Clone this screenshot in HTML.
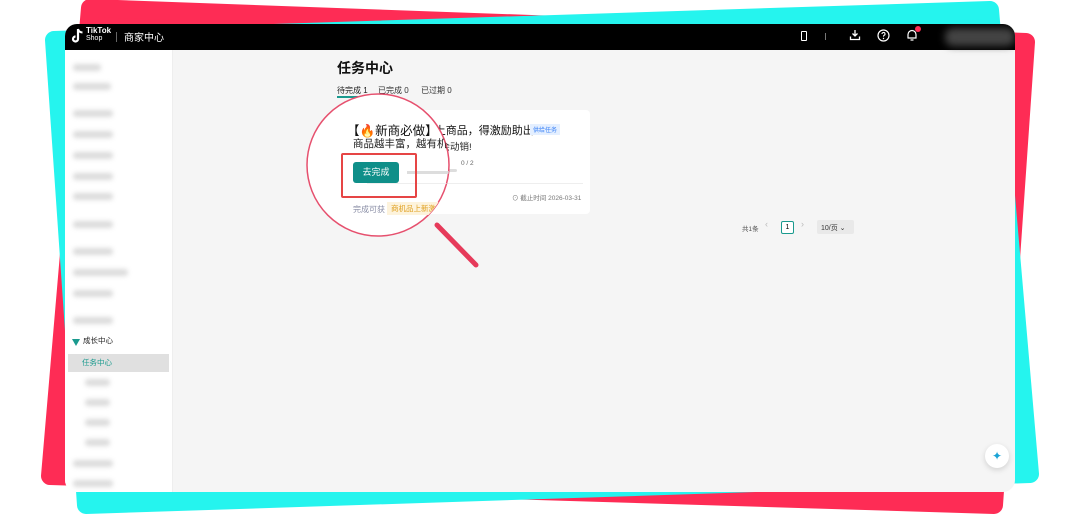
<!DOCTYPE html>
<html><head><meta charset="utf-8"><style>
*{margin:0;padding:0;box-sizing:border-box}
body{width:1080px;height:516px;background:#fff;position:relative;overflow:hidden;font-family:"Liberation Sans","Noto Sans CJK SC",sans-serif}
.abs{position:absolute}
.screen{position:absolute;left:65px;top:24px;width:950px;height:468px;border-radius:12px;overflow:hidden;background:#f5f5f5}
.hdr{position:absolute;left:0;top:0;width:950px;height:26px;background:#000;color:#fff}
.side{position:absolute;left:0;top:26px;width:107px;height:442px;background:#fff}
.blob{position:absolute;height:7px;background:#c4c4c4;border-radius:3px;filter:blur(2.5px);opacity:.6}
.card{position:absolute;left:272px;top:86px;width:253px;height:104px;background:#fff;border-radius:4px}
</style></head><body>
<svg class="abs" style="left:0;top:0" width="1080" height="516">
<polygon points="90,8 1026,42 994,505 50,476" fill="#fe2c55" stroke="#fe2c55" stroke-width="18" stroke-linejoin="round"/>
<polygon points="54,40 990,10 1030,474 86,505" fill="#25f4ee" stroke="#25f4ee" stroke-width="18" stroke-linejoin="round"/>
</svg>
<div class="screen">
 <div class="hdr">
  <svg class="abs" style="left:6px;top:4px" width="14" height="16" viewBox="0 0 14 16"><path d="M7 1v10a2.5 2.5 0 1 1-2.5-2.5" fill="none" stroke="#fff" stroke-width="2.2"/><path d="M7 1c.5 2 2 3.3 4.5 3.5" fill="none" stroke="#fff" stroke-width="2"/></svg>
  <div class="abs" style="left:21px;top:3px;font-size:8px;font-weight:bold;line-height:8px">TikTok</div>
  <div class="abs" style="left:21px;top:11px;font-size:7px;line-height:8px">Shop</div>
  <div class="abs" style="left:51px;top:8px;width:1px;height:10px;background:#666"></div>
  <div class="abs" style="left:59px;top:5px;font-size:10px">商家中心</div>
  <div class="abs" style="left:736px;top:7px;width:6px;height:10px;border:1.3px solid #fff;border-radius:1px"></div>
  <div class="abs" style="left:760px;top:9px;width:1px;height:7px;background:#777"></div>
  <svg class="abs" style="left:784px;top:5px" width="12" height="12" viewBox="0 0 12 12"><path d="M6 1v6M3.5 4.5 6 7l2.5-2.5M1.5 7.5v3h9v-3" fill="none" stroke="#fff" stroke-width="1.3"/></svg>
  <svg class="abs" style="left:812px;top:5px" width="13" height="13" viewBox="0 0 13 13"><circle cx="6.5" cy="6.5" r="5.5" fill="none" stroke="#fff" stroke-width="1.2"/><path d="M5 5a1.5 1.5 0 1 1 2 1.4c-.5.2-.5.6-.5 1.2" fill="none" stroke="#fff" stroke-width="1.1"/><circle cx="6.5" cy="9.5" r=".7" fill="#fff"/></svg>
  <svg class="abs" style="left:840px;top:4px" width="14" height="14" viewBox="0 0 14 14"><path d="M3 10V6.5a4 4 0 0 1 8 0V10H2.5h9M5.5 12h3" fill="none" stroke="#fff" stroke-width="1.2"/></svg>
  <div class="abs" style="left:850px;top:2px;width:6px;height:6px;border-radius:50%;background:#fe2c55"></div>
  <div class="abs" style="left:880px;top:4px;width:70px;height:18px;background:#444;filter:blur(4px);border-radius:8px"></div>
 </div>
 <div class="side">
  <div class="blob" style="left:8px;top:14px;width:28px"></div>
  <div class="blob" style="left:8px;top:33px;width:38px"></div>
  <div class="blob" style="left:8px;top:60px;width:40px"></div>
  <div class="blob" style="left:8px;top:81px;width:40px"></div>
  <div class="blob" style="left:8px;top:102px;width:40px"></div>
  <div class="blob" style="left:8px;top:123px;width:40px"></div>
  <div class="blob" style="left:8px;top:143px;width:40px"></div>
  <div class="blob" style="left:8px;top:171px;width:40px"></div>
  <div class="blob" style="left:8px;top:198px;width:40px"></div>
  <div class="blob" style="left:8px;top:219px;width:55px"></div>
  <div class="blob" style="left:8px;top:240px;width:40px"></div>
  <div class="blob" style="left:8px;top:267px;width:40px"></div>
  <svg class="abs" style="left:7px;top:289px" width="8" height="7" viewBox="0 0 8 7"><path d="M0 0h8L4 7z" fill="#1a9a8e"/></svg>
  <div class="abs" style="left:18px;top:285px;font-size:7.5px;color:#222">成长中心</div>
  <div class="abs" style="left:3px;top:304px;width:101px;height:18px;background:#e0e0e0"></div>
  <div class="abs" style="left:17px;top:307px;font-size:7.5px;color:#1a9a8e">任务中心</div>
  <div class="blob" style="left:20px;top:329px;width:25px"></div>
  <div class="blob" style="left:20px;top:349px;width:25px"></div>
  <div class="blob" style="left:20px;top:369px;width:25px"></div>
  <div class="blob" style="left:20px;top:389px;width:25px"></div>
  <div class="blob" style="left:8px;top:410px;width:40px"></div>
  <div class="blob" style="left:8px;top:430px;width:40px"></div>
 </div>
 <div class="abs" style="left:107px;top:26px;width:1px;height:442px;background:#eee"></div>
 <div class="abs" style="left:272px;top:34px;font-size:14px;font-weight:bold;color:#111">任务中心</div>
 <div class="abs" style="left:272px;top:61px;font-size:8px;color:#222">待完成 1</div>
 <div class="abs" style="left:272px;top:72px;width:29px;height:1.5px;background:#1a9a8e"></div>
 <div class="abs" style="left:313px;top:61px;font-size:8px;color:#333">已完成 0</div>
 <div class="abs" style="left:356px;top:61px;font-size:8px;color:#333">已过期 0</div>
 <div class="card">
  <div class="abs" style="left:18px;top:12px;font-size:11px;color:#111;white-space:nowrap">【🔥新商必做】上商品，得激励助出...</div>
  <div class="abs" style="left:193px;top:14px;font-size:6px;color:#3b82f6;background:#e4efff;padding:1px 3px">供给任务</div>
  <div class="abs" style="left:18px;top:29px;font-size:9.5px;color:#222">商品越丰富，越有机会动销!</div>
  <div class="abs" style="left:70px;top:59px;width:50px;height:3px;background:#ddd;border-radius:2px"></div>
  <div class="abs" style="left:124px;top:50px;font-size:6.5px;color:#666">0 / 2</div>
  <div class="abs" style="left:10px;top:73px;width:236px;height:1px;background:#eee"></div>
  <div class="abs" style="left:175px;top:82px;font-size:6.5px;color:#777">⊙ 截止时间 2026-03-31</div>
 </div>
 <div class="abs" style="left:677px;top:199px;font-size:6.5px;color:#555">共1条</div>
 <div class="abs" style="left:700px;top:195px;font-size:9px;color:#bbb">‹</div>
 <div class="abs" style="left:716px;top:197px;width:13px;height:13px;border:1px solid #1a9a8e;border-radius:2px;background:#fff;font-size:7px;text-align:center;line-height:11px">1</div>
 <div class="abs" style="left:736px;top:195px;font-size:9px;color:#bbb">›</div>
 <div class="abs" style="left:752px;top:196px;width:37px;height:14px;background:#e9e9e9;border-radius:2px;font-size:7px;color:#333;padding:3px 4px">10/页 ⌄</div>
 <div class="abs" style="left:920px;top:420px;width:24px;height:24px;border-radius:50%;background:#fff;box-shadow:0 2px 6px rgba(0,0,0,.15);color:#1aa3d6;font-size:12px;text-align:center;line-height:24px">✦</div>
</div>
<svg class="abs" style="left:0;top:0" width="1080" height="516">
 <line x1="437" y1="225" x2="476" y2="265" stroke="#e63a5a" stroke-width="5" stroke-linecap="round"/>
 <circle cx="378" cy="165" r="71" fill="#fff" stroke="#e6506e" stroke-width="1.5"/>
</svg>
<div class="abs" style="left:307px;top:94px;width:142px;height:142px;border-radius:50%;overflow:hidden">
 <div class="abs" style="left:40px;top:26px;font-size:12.5px;color:#111;white-space:nowrap">【🔥新商必做】</div>
 <div class="abs" style="left:46px;top:42px;font-size:10.5px;color:#222;white-space:nowrap">商品越丰富，越有机会</div>
 <div class="abs" style="left:46px;top:68px;width:46px;height:21px;background:#0f8f89;border-radius:3px;color:#fff;font-size:9px;text-align:center;line-height:21px">去完成</div>
 <div class="abs" style="left:100px;top:77px;width:45px;height:3px;background:#ddd"></div>
 <div class="abs" style="left:60px;top:89px;width:90px;height:1px;background:#eee"></div>
 <div class="abs" style="left:46px;top:110px;font-size:8px;color:#8a8ea6">完成可获</div>
 <div class="abs" style="left:80px;top:108px;font-size:7.5px;color:#e0a020;background:#fdf3dc;padding:1px 4px;white-space:nowrap">商机品上新激励</div>
</div>
<div class="abs" style="left:341px;top:153px;width:76px;height:45px;border:2px solid #e64545;border-radius:2px"></div>
</body></html>
